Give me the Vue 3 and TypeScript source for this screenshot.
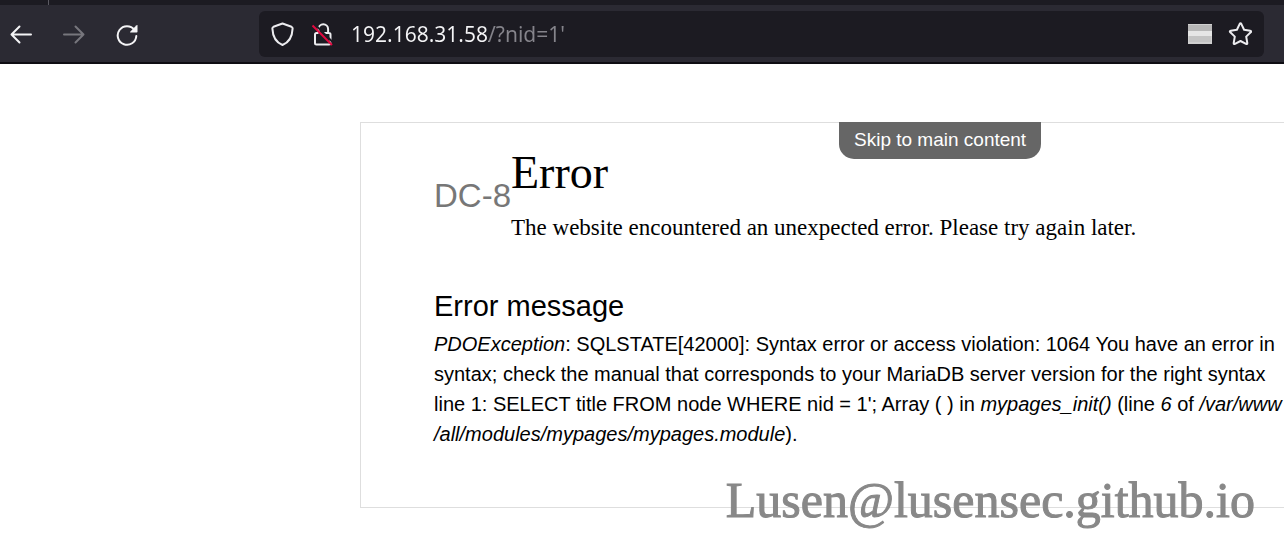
<script setup lang="ts">
import { ref } from 'vue'

const address = ref<string>("192.168.31.58/?nid=1'")
</script>

<template>
  <div class="window">
    <header class="chrome">
      <div class="tabs"><span class="tab-divider"></span></div>
      <nav class="toolbar" aria-label="Browser toolbar">
        <div class="nav-buttons">
          <button type="button" aria-label="Back">
            <svg width="24" height="24" viewBox="0 0 24 24" fill="none" stroke="#f4f4f6" stroke-width="2" stroke-linecap="round" stroke-linejoin="round">
              <path d="M22 12.500H2.500M10.500 4.500L2.500 12.500l8 8" />
            </svg>
          </button>
          <button type="button" aria-label="Forward" disabled>
            <svg width="24" height="24" viewBox="0 0 24 24" fill="none" stroke="#77767d" stroke-width="2" stroke-linecap="round" stroke-linejoin="round">
              <path d="M2 12.500h19.500M13.500 4.500l8 8-8 8" />
            </svg>
          </button>
          <button type="button" aria-label="Reload">
            <svg width="24" height="24" viewBox="0 0 24 24" fill="none">
              <path d="M19.400 7.800A9.300 9.300 0 1 0 21.300 14" stroke="#f4f4f6" stroke-width="2" stroke-linecap="round" />
              <path d="M22.500 3.500v6.200q0 .8-.8.8h-6.200q-1 0-.3-.8l6-6.300q1.300-1 1.300.1z" fill="#f4f4f6" />
            </svg>
          </button>
        </div>
        <div class="urlbar">
          <button type="button" aria-label="Tracking protection">
            <svg width="24" height="24" viewBox="0 0 24 24" fill="none" stroke="#ececef" stroke-width="2" stroke-linejoin="round">
              <path d="M11.500 1.500L20.500 4.800q1.200.5 1.100 1.800C21.300 14 18.800 20 11.500 23 4.200 20 1.700 14 1.400 6.600Q1.300 5.300 2.500 4.800z" />
            </svg>
          </button>
          <button type="button" aria-label="Connection is not secure">
            <svg width="24" height="24" viewBox="0 0 24 24" fill="none">
              <path d="M7.500 11V7a4.800 4.800 0 0 1 9.600 0v4M7.500 11H5.500Q4 11 4 12.500V21Q4 22.500 5.500 22.500H18Q19.500 22.500 19.500 21V12.500Q19.500 11 18 11H13" stroke="#ececef" stroke-width="2" />
              <path d="M3.500 2L22 20.500" stroke="#1c1b22" stroke-width="2" />
              <path d="M1.500 3.500L21 23" stroke="#e4093f" stroke-width="2" />
            </svg>
          </button>
          <input v-model="address" class="address" type="text" aria-label="Address" spellcheck="false" />
          <button type="button" aria-label="Page language">
            <svg width="24" height="20" viewBox="0 0 24 20">
              <path d="M0 0h24v20H0z" fill="#d0d0d0" />
              <path d="M0 1h24v6H0z" fill="#b7b7b7" />
              <path d="M0 7h24v5H0z" fill="#e6e6e6" />
              <path d="M1 12h22v6H1z" fill="#c4c4c4" />
            </svg>
          </button>
          <button type="button" aria-label="Bookmark this page">
            <svg width="24" height="24" viewBox="0 0 24 24" fill="none" stroke="#ececef" stroke-width="2" stroke-linejoin="round">
              <path d="M11.600 2.100q.9-1.500 1.800 0l2.700 5.700 6.100.9q1.600.4.500 1.600l-4.500 4.300 1.100 6.400q.1 1.500-1.300.9L12.500 19l-5.500 2.900q-1.400.6-1.300-.9l1.100-6.400-4.500-4.300q-1.100-1.200.5-1.600l6.100-.9z" />
            </svg>
          </button>
        </div>
      </nav>
    </header>

    <div class="page">
      <a class="skip-link" href="#main">Skip to main content</a>
      <div class="banner">
        <a class="site-name" href="#">DC-8</a>
        <div class="intro">
          <h1>Error</h1>
          <p>The website encountered an unexpected error. Please try again later.</p>
        </div>
      </div>
      <main id="main">
        <h2>Error message</h2>
        <p>
          <em>PDOException</em>: SQLSTATE[42000]: Syntax error or access violation: 1064 You have an error in<br />
          syntax; check the manual that corresponds to your MariaDB server version for the right syntax<br />
          line 1: SELECT title FROM node WHERE nid = 1'; Array ( ) in <em>mypages_init()</em> (line <em>6</em> of <em>/var/www</em><br />
          <em>/all/modules/mypages/mypages.module</em>).
        </p>
      </main>
      <div class="watermark">Lusen@lusensec.github.io</div>
    </div>
  </div>
</template>

<style>
body {
  margin: 0;
  background: #fff;
}
</style>

<style scoped>
.window {
  overflow: hidden;
  min-height: 100vh;
  color: #000;
  font-family: "Liberation Sans", Arial, sans-serif;
}
.chrome {
  background: #2b2a33;
  border-bottom: 2px solid #0e0d13;
}
.tabs {
  height: 5px;
  background: #1c1b22;
}
.tab-divider {
  display: block;
  width: 1px;
  height: 5px;
  margin-left: 48px;
  background: #5b5a62;
}
.toolbar {
  display: flex;
  align-items: center;
  gap: 120px;
  padding: 6px 20px 5px 9px;
}
button {
  display: flex;
  padding: 0;
  border: 0;
  background: none;
}
.nav-buttons {
  display: flex;
  gap: 29px;
}
.urlbar {
  display: flex;
  flex: 1;
  align-items: center;
  gap: 16px;
  height: 46px;
  padding: 0 12px;
  border-radius: 6px;
  background: #1c1b22;
}
.address {
  flex: 1;
  min-width: 0;
  height: 32px;
  padding: 0;
  border: 0;
  outline: 0;
  color: #f4f4f6;
  font: 21px/32px "Noto Sans", sans-serif;
  background: linear-gradient(to right, #f4f4f6 138px, #85848b 138px);
  background-clip: text;
  -webkit-background-clip: text;
  -webkit-text-fill-color: transparent;
}
.page {
  position: relative;
  margin: 58px 0 0 360px;
  padding: 27px 0 58px 73px;
  border: 1px solid #dedede;
  border-right: 0;
  white-space: nowrap;
}
.skip-link {
  position: absolute;
  top: -1px;
  left: 478px;
  padding: 4px 15px 6px;
  border-radius: 0 0 15px 15px;
  background: #666;
  color: #fff;
  font-size: 19px;
  line-height: 27px;
  text-decoration: none;
}
.banner {
  display: flex;
  align-items: flex-start;
}
.site-name {
  padding-top: 26px;
  color: #777;
  font-size: 33px;
  line-height: 40px;
  text-decoration: none;
}
.intro {
  font-family: "Liberation Serif", "Times New Roman", serif;
}
h1,
h2,
p {
  margin: 0;
  font-weight: 400;
}
h1 {
  font-size: 46px;
  line-height: 46px;
}
.intro p {
  margin-top: 17px;
  font-size: 23px;
  line-height: 30px;
}
main {
  margin-top: 43px;
}
h2 {
  margin-bottom: 3px;
  font-size: 29px;
  line-height: 40px;
}
main p {
  font-size: 20px;
  line-height: 30px;
}
.watermark {
  position: absolute;
  right: 29px;
  bottom: -22px;
  color: #888;
  font-family: "Liberation Serif", "Times New Roman", serif;
  font-size: 50px;
  line-height: 58px;
  -webkit-text-stroke: 1px #888;
}
</style>
